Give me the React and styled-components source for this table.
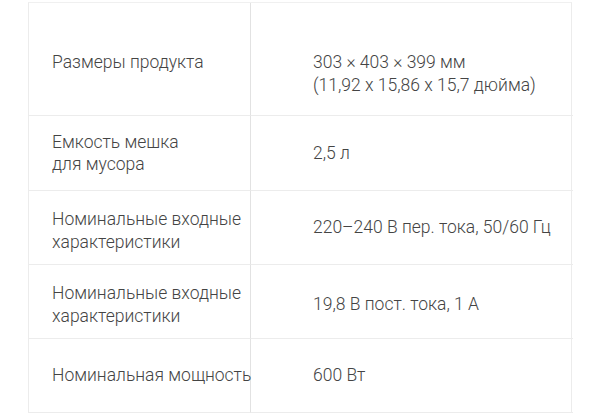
import React from "react";
import styled, { createGlobalStyle } from "styled-components";

const GlobalStyle = createGlobalStyle`
  body {
    margin: 0;
    background: #ffffff;
    font-family: Roboto, "Noto Sans", "Liberation Sans", sans-serif;
  }
`;

const Page = styled.div`
  padding: 2px 28px 0 28px;
`;

const Table = styled.div`
  display: grid;
  grid-template-columns: 222px 322px;
  border-top: 1px solid #f0f0f0;
  border-left: 1px solid #ececec;
  border-right: 1px solid #ececec;
`;

// top: text sits at a fixed offset; otherwise centred, nudged down by `nudge` px
const Cell = styled.div`
  height: ${(p) => p.h}px;
  display: flex;
  align-items: ${(p) => (p.top ? "flex-start" : "center")};
  box-sizing: border-box;
  border-bottom: 1px solid #ececec;
  padding-top: ${(p) => (p.top ? 48 : (p.nudge || 0) * 2)}px;
  padding-left: ${(p) => (p.value ? 62 : 23)}px;
  border-right: ${(p) => (p.value ? "none" : "1px solid #e2e2e2")};
  font-size: 17.5px;
  font-weight: 300;
  line-height: 22.5px;
  color: #444444;
  white-space: nowrap;
`;

const rows = [
  { h: 113, top: true, label: ["Размеры продукта"], value: ["303 × 403 × 399 мм", "(11,92 x 15,86 x 15,7 дюйма)"] },
  { h: 75, label: ["Емкость мешка", "для мусора"], value: ["2,5 л"] },
  { h: 74, ln: 3, label: ["Номинальные входные", "характеристики"], value: ["220–240 В пер. тока, 50/60 Гц"] },
  { h: 74, ln: 3, vn: 3, label: ["Номинальные входные", "характеристики"], value: ["19,8 В пост. тока, 1 А"] },
  { h: 74, label: ["Номинальная мощность"], value: ["600 Вт"] },
];

const Lines = ({ lines }) => (
  <div>
    {lines.map((l, i) => (
      <React.Fragment key={i}>
        {i > 0 && <br />}
        {l}
      </React.Fragment>
    ))}
  </div>
);

export default function App() {
  return (
    <>
      <GlobalStyle />
      <Page>
        <Table>
          {rows.map((r, i) => (
            <React.Fragment key={i}>
              <Cell h={r.h} top={r.top} nudge={r.ln}>
                <Lines lines={r.label} />
              </Cell>
              <Cell h={r.h} top={r.top} nudge={r.vn} value>
                <Lines lines={r.value} />
              </Cell>
            </React.Fragment>
          ))}
        </Table>
      </Page>
    </>
  );
}
